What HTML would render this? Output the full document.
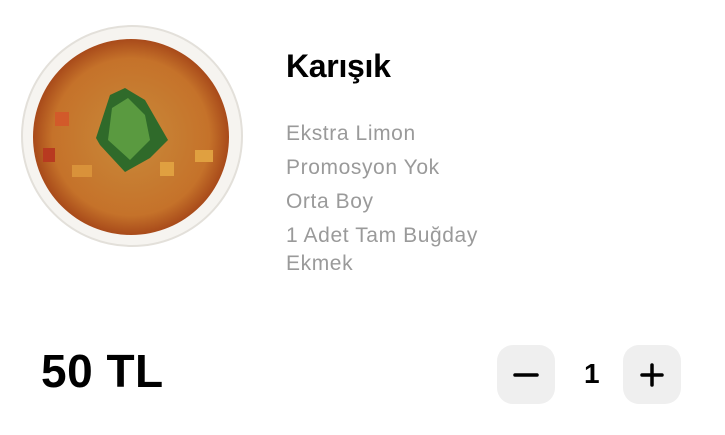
<!DOCTYPE html>
<html><head><meta charset="utf-8"><style>
body{margin:0;width:725px;height:435px;background:#fff;font-family:"Liberation Sans",sans-serif;position:relative;overflow:hidden}
.t{position:absolute;left:286px;top:48px;font-size:32px;font-weight:bold;color:#000;letter-spacing:-0.3px}
.l{position:absolute;left:286px;color:#9a9a9a;font-size:21px;line-height:28px;letter-spacing:0.6px}
.p{position:absolute;left:41px;top:344px;font-size:46px;font-weight:bold;color:#000;letter-spacing:0.5px}
.b{position:absolute;top:345px;width:58px;height:59px;border-radius:16px;background:#efefef}
.q{position:absolute;left:584px;top:358px;font-size:28px;color:#000;font-weight:600}
</style></head><body>
<svg style="position:absolute;left:0;top:0" width="260" height="260">
<defs><radialGradient id="g" cx="50%" cy="50%" r="50%"><stop offset="0" stop-color="#c98a3a"/><stop offset="0.8" stop-color="#c5722a"/><stop offset="1" stop-color="#a84a1a"/></radialGradient></defs>
<circle cx="132" cy="136" r="110" fill="#f6f4f0" stroke="#e3e0da" stroke-width="2"/>
<circle cx="131" cy="137" r="98" fill="url(#g)"/>
<rect x="55" y="112" width="14" height="14" fill="#d25a2a"/>
<rect x="72" y="165" width="20" height="12" fill="#d9923a"/>
<rect x="160" y="162" width="14" height="14" fill="#e0a040"/>
<rect x="195" y="150" width="18" height="12" fill="#e0a040"/>
<rect x="43" y="148" width="12" height="14" fill="#b83a20"/>
<path d="M110 95 L125 88 L145 100 L168 140 L150 158 L125 172 L100 145 L96 138 Z" fill="#2f6a2a"/>
<path d="M112 108 L128 98 L145 115 L150 140 L130 160 L108 140Z" fill="#5a9a40"/>
</svg>
<div class="t">Karışık</div>
<div class="l" style="top:120px">Ekstra Limon</div>
<div class="l" style="top:154px">Promosyon Yok</div>
<div class="l" style="top:188px">Orta Boy</div>
<div class="l" style="top:222px">1 Adet Tam Buğday<br>Ekmek</div>
<div class="p">50 TL</div>
<div class="b" style="left:497px"><svg width="58" height="59"><path d="M18 30H40" stroke="#000" stroke-width="3.5" stroke-linecap="round"/></svg></div>
<div class="q">1</div>
<div class="b" style="left:623px"><svg width="58" height="59"><path d="M19 30H39M29 20V40" stroke="#000" stroke-width="3.5" stroke-linecap="round"/></svg></div>
</body></html>
